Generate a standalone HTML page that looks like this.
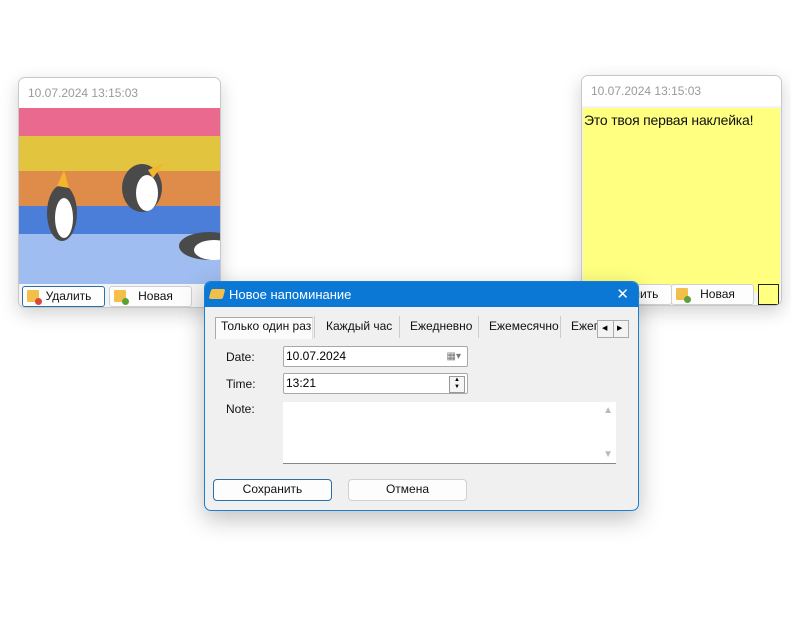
<!DOCTYPE html>
<html><head><meta charset="utf-8"><style>
body{margin:0;width:791px;height:617px;background:#fff;position:relative;overflow:hidden;font-family:"Liberation Sans",sans-serif;}
.win{position:absolute;border:1px solid #c8c8c8;border-radius:7px;background:#f3f3f3;overflow:hidden;box-shadow:0 6px 18px rgba(0,0,0,.18);}
.hdr{position:absolute;left:0;right:0;top:0;height:30px;background:#fff;color:#9a9a9a;font-size:12px;line-height:30px;padding-left:9px;}
.btn{position:absolute;height:19px;background:#fdfdfd;border:1px solid #d0d0d0;border-radius:3px;font-size:12px;line-height:19px;text-align:center;color:#111;}
.ico{position:absolute;left:4px;top:3px;width:12px;height:12px;background:#f2c04a;border-radius:1px;}
.ico i{position:absolute;right:-3px;bottom:-3px;width:7px;height:7px;border-radius:50%;}
.dlg{position:absolute;left:204px;top:281px;width:433px;height:228px;border:1px solid #1a7fd0;border-radius:7px;background:#f0f0f0;overflow:hidden;box-shadow:0 8px 24px rgba(0,0,0,.25);}
.tb{height:25px;background:#0a78d4;color:#fff;font-size:13px;line-height:25px;padding-left:24px;position:relative;}
.lbl{position:absolute;font-size:12px;color:#111;}
.inp{position:absolute;background:#fff;border:1px solid #a8a8a8;border-radius:2px;font-size:12px;line-height:19px;padding-left:2px;}
.tab{position:absolute;top:37px;font-size:12px;color:#111;}
.sep{position:absolute;top:34px;width:1px;height:22px;background:#ccc;}
</style></head><body>

<div class="win" style="left:18px;top:77px;width:201px;height:229px;">
 <div class="hdr">10.07.2024 13:15:03</div>
 <svg style="position:absolute;left:0;top:30px" width="201" height="176">
  <rect y="0" width="201" height="28" fill="#e9698f"/>
  <rect y="28" width="201" height="35" fill="#e2c43f"/>
  <rect y="63" width="201" height="35" fill="#df8c4b"/>
  <rect y="98" width="201" height="28" fill="#4a7ed9"/>
  <rect y="126" width="201" height="50" fill="#9fbdf0"/>
  <ellipse cx="43" cy="105" rx="15" ry="28" fill="#4a4a4a"/>
  <ellipse cx="45" cy="110" rx="9" ry="20" fill="#fff"/>
  <polygon points="38,78 45,62 50,80" fill="#f2b52b"/>
  <ellipse cx="123" cy="80" rx="20" ry="24" fill="#4a4a4a"/>
  <ellipse cx="128" cy="85" rx="11" ry="18" fill="#fff"/>
  <polygon points="129,62 145,55 134,70" fill="#f2b52b"/>
  <ellipse cx="190" cy="138" rx="30" ry="14" fill="#4a4a4a"/>
  <ellipse cx="195" cy="142" rx="20" ry="10" fill="#fff"/>
 </svg>
 <div class="btn" style="left:3px;top:208px;width:81px;border-color:#2a6fa8;"><div class="ico"><i style="background:#d9463b"></i></div>&nbsp;&nbsp;&nbsp;Удалить</div>
 <div class="btn" style="left:90px;top:208px;width:81px;"><div class="ico"><i style="background:#5aa13a"></i></div>&nbsp;&nbsp;&nbsp;Новая</div>
</div>

<div class="win" style="left:581px;top:75px;width:199px;height:229px;">
 <div class="hdr">10.07.2024 13:15:03</div>
 <div style="position:absolute;left:1px;right:1px;top:32px;height:176px;background:#ffff80;font-size:14px;padding:4px 1px;color:#111;white-space:nowrap;letter-spacing:-0.2px;">Это твоя первая наклейка!</div>
 <div class="btn" style="left:7px;top:208px;width:81px;">&nbsp;&nbsp;&nbsp;Удалить</div>
 <div class="btn" style="left:89px;top:208px;width:81px;"><div class="ico"><i style="background:#5aa13a"></i></div>&nbsp;&nbsp;&nbsp;Новая</div>
 <div style="position:absolute;left:176px;top:208px;width:19px;height:19px;background:#ffff80;border:1px solid #222;"></div>
</div>

<div class="dlg">
 <div class="tb"><span style="position:absolute;left:5px;top:7px;width:14px;height:10px;background:#f2c04a;border-radius:2px;transform:skewX(-15deg)"></span>Новое напоминание<span style="position:absolute;right:9px;top:0;font-size:15px;font-family:'DejaVu Sans',sans-serif">✕</span></div>
 <div style="position:absolute;left:10px;top:35px;width:96px;height:21px;background:#fbfbfb;border:1px solid #aaa;border-right-color:#ddd;border-bottom:none;"></div>
 <div class="tab" style="left:16px;">Только один раз</div>
 <div class="sep" style="left:109px"></div>
 <div class="tab" style="left:121px;">Каждый час</div>
 <div class="sep" style="left:194px"></div>
 <div class="tab" style="left:205px;">Ежедневно</div>
 <div class="sep" style="left:273px"></div>
 <div class="tab" style="left:284px;">Ежемесячно</div>
 <div class="sep" style="left:355px"></div>
 <div class="tab" style="left:366px;width:26px;overflow:hidden;white-space:nowrap">Ежегодно</div>
 <div style="position:absolute;left:392px;top:38px;width:30px;height:16px;border:1px solid #aaa;background:#f3f3f3;font-size:7px;line-height:16px;color:#000"><span style="position:absolute;left:4px">◀</span><span style="position:absolute;left:15px;top:0;width:1px;height:16px;background:#aaa"></span><span style="position:absolute;left:19px">▶</span></div>
 <div class="lbl" style="left:21px;top:68px;">Date:</div>
 <div class="inp" style="left:78px;top:64px;width:181px;height:19px;">10.07.2024<span style="position:absolute;right:6px;top:0;color:#777;font-size:10px">▦▾</span></div>
 <div class="lbl" style="left:21px;top:95px;">Time:</div>
 <div class="inp" style="left:78px;top:91px;width:181px;height:19px;">13:21<span style="position:absolute;right:2px;top:2px;width:14px;height:15px;border:1px solid #999;background:#f5f5f5;font-size:6px;line-height:7px;text-align:center">▲<br>▼</span></div>
 <div class="lbl" style="left:21px;top:120px;">Note:</div>
 <div style="position:absolute;left:78px;top:120px;width:333px;height:61px;background:#fff;border-bottom:1px solid #888;"><span style="position:absolute;right:3px;top:3px;color:#bbb;font-size:10px">▲</span><span style="position:absolute;right:3px;bottom:3px;color:#bbb;font-size:10px">▼</span></div>
 <div class="btn" style="left:8px;top:197px;width:117px;height:20px;border-color:#2a6fa8;border-radius:4px;">Сохранить</div>
 <div class="btn" style="left:143px;top:197px;width:117px;height:20px;border-radius:4px;">Отмена</div>
</div>
</body></html>
